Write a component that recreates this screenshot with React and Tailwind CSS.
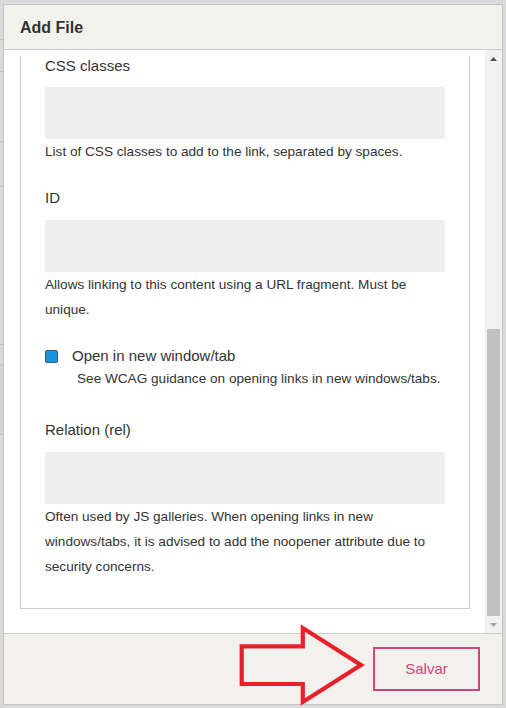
import React from "react";

function Label({ children, className = "" }) {
  return <div className={`text-[15px] leading-[20px] text-[#333] ${className}`}>{children}</div>;
}

function Field() {
  return <div className="h-[52px] bg-[#eeeeee]" />;
}

function Help({ children, className = "" }) {
  return <div className={`text-[13.6px] leading-[25px] text-[#333] whitespace-nowrap ${className}`}>{children}</div>;
}

export default function App() {
  return (
    <div className="relative w-[506px] h-[708px] overflow-hidden bg-[#dadada] pt-[4px] pl-[3px] font-['Liberation_Sans',Arial,sans-serif]">
      {/* faint background page strips */}
      <div className="absolute left-0 top-0 w-[3px] h-[708px] flex flex-col">
        <div className="h-[40px] border-b border-[#c4c4c4]" />
        <div className="h-[32px] border-b border-[#c4c4c4]" />
        <div className="h-[70px] border-b border-[#c4c4c4]" />
        <div className="h-[45px] border-b border-[#c4c4c4]" />
        <div className="h-[158px] border-b border-[#c4c4c4]" />
        <div className="h-[20px] border-b border-[#c4c4c4]" />
        <div className="h-[70px] border-b border-[#c4c4c4] bg-[#d2d2d2]" />
      </div>

      <div className="relative w-[500px] h-[701px] border border-[#c4c4c4] bg-white flex flex-col">
        {/* header */}
        <div className="h-[45px] shrink-0 bg-[#f2f2ec] border-b border-[#cdcdcd] flex items-center pl-4 pt-[1px]">
          <span className="text-[16px] font-bold text-[#333]">Add File</span>
        </div>

        {/* body */}
        <div className="h-[583px] shrink-0 flex overflow-hidden">
          <div className="flex-1 bg-white pt-[6px]">
            <div className="ml-[16px] mr-[15px] border-x border-b border-[#cccccc] px-[24px] pb-[29px]">
              <Label>CSS classes</Label>
              <div className="mt-[11px]">
                <Field />
              </div>
              <Help>List of CSS classes to add to the link, separated by spaces.</Help>

              <Label className="mt-[24px]">ID</Label>
              <div className="mt-[12px]">
                <Field />
              </div>
              <Help>
                Allows linking to this content using a URL fragment. Must be
                <br />
                unique.
              </Help>

              <div className="mt-[24px] h-[20px] flex items-center gap-[14px]">
                <div className="w-[13px] h-[13px] rounded-[2px] bg-[#1a93dc] border border-[#2f5f86]" />
                <span className="text-[15px] leading-[20px] text-[#333]">Open in new window/tab</span>
              </div>
              <Help className="ml-[32px]">See WCAG guidance on opening links in new windows/tabs.</Help>

              <Label className="mt-[29px]">Relation (rel)</Label>
              <div className="mt-[12px]">
                <Field />
              </div>
              <Help>
                Often used by JS galleries. When opening links in new
                <br />
                windows/tabs, it is advised to add the noopener attribute due to
                <br />
                security concerns.
              </Help>
            </div>
          </div>

          {/* scrollbar */}
          <div className="w-[17px] shrink-0 bg-[#f1f1f1] flex flex-col">
            <div className="h-[17px] flex items-center justify-center">
              <svg width="7" height="4" viewBox="0 0 7 4">
                <polygon points="3.5,0 7,4 0,4" fill="#505050" />
              </svg>
            </div>
            <div className="flex-1 flex flex-col justify-end items-center">
              <div className="w-[13px] h-[287px] bg-[#c1c1c1]" />
            </div>
            <div className="h-[17px] flex items-center justify-center">
              <svg width="7" height="4" viewBox="0 0 7 4">
                <polygon points="0,0 7,0 3.5,4" fill="#a3a3a3" />
              </svg>
            </div>
          </div>
        </div>

        {/* footer */}
        <div className="flex-1 border-t border-[#cdcdcd] bg-[#f2f1ed] flex items-center justify-end pr-[22px]">
          <button className="w-[107px] h-[44px] border-2 border-[#d0457b] text-[#d0457b] text-[15px] bg-transparent">
            Salvar
          </button>
        </div>
      </div>

      {/* red annotation arrow */}
      <svg
        className="absolute left-[236px] top-[620px] pointer-events-none"
        width="135"
        height="88"
        viewBox="0 0 135 88"
      >
        <polygon
          points="5.7,26.3 66.8,26.3 66.8,8 125,45 66.8,82 66.8,64 5.7,64"
          fill="none"
          stroke="#e8202a"
          strokeWidth="4.2"
          strokeLinejoin="miter"
        />
      </svg>
    </div>
  );
}
